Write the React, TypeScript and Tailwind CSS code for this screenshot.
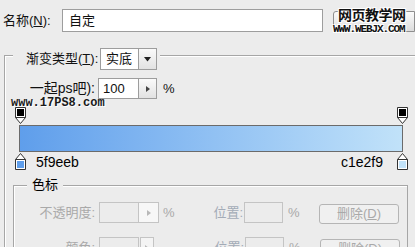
const font = { fontFamily: '"Liberation Sans", "Noto Sans CJK SC", sans-serif' };

function DropArrow() {
  return (
    <svg width="7" height="5" viewBox="0 0 7 5">
      <path d="M0 0h7L3.5 4.5z" fill="#222" />
    </svg>
  );
}

function SpinArrow({ dim = false }: { dim?: boolean }) {
  return (
    <svg width="4" height="6" viewBox="0 0 4 6">
      <path d="M0 0l4 3-4 3z" fill={dim ? '#b8b8b8' : '#444'} />
    </svg>
  );
}

function TopStop() {
  return (
    <svg width="11" height="17" viewBox="0 0 11 17">
      <path d="M0.5 0.5h10v10l-5 6l-5-6z" fill="#fff" stroke="#333" />
      <rect x="2" y="2" width="7" height="7" fill="#000" />
      <path d="M0.5 10.5h10" stroke="#333" />
    </svg>
  );
}

function BottomStop({ color }: { color: string }) {
  return (
    <svg width="11" height="17" viewBox="0 0 11 17">
      <path d="M5.5 0.5l5 6v10h-10v-10z" fill="#fff" stroke="#333" />
      <rect x="2" y="8" width="7" height="7" fill={color} />
      <path d="M0.5 6.5h10" stroke="#333" />
    </svg>
  );
}

function DisabledRow({ label, swatch }: { label: string; swatch?: boolean }) {
  return (
    <div className="flex items-center h-[21px] text-[13px] text-[#a9a9a9]">
      <div className="w-[85px] pr-[4px] text-right">{label}</div>
      <div className="w-[40px] h-[21px] border border-[#c4c4c4]" />
      {swatch ? (
        <div className="w-[14px] h-[21px] ml-[1px] border border-[#c4c4c4] bg-[#f4f4f4] flex items-center justify-center">
          <SpinArrow dim />
        </div>
      ) : (
        <div className="w-[20px] h-[21px] border border-l-0 border-[#c4c4c4] bg-[#f7f7f7] flex items-center justify-center">
          <SpinArrow dim />
        </div>
      )}
      <div className={`${swatch ? 'w-[57px]' : 'w-[51px]'} pl-[4px]`}>{swatch ? '' : '%'}</div>
      <div className="w-[34px] text-right pr-[1px] text-[#a3abb7]">位置:</div>
      <div className="w-[39px] h-[21px] border border-[#c4c4c4]" />
      <div className="w-[36px] pl-[5px]">%</div>
      <div className="w-[80px] h-[20px] self-start mt-[2px] rounded-[3px] border border-[#b5b5b5] bg-[#f0f0f0] flex items-center justify-center">
        删除(<span className="underline">D</span>)
      </div>
    </div>
  );
}

export default function App() {
  return (
    <div className="relative w-[415px] h-[247px] overflow-hidden bg-[#ececec] text-[#111]" style={font}>
      <div className="flex items-start pt-[9px] pl-[3px]">
        <div className="w-[59px] h-[23px] flex items-center text-[13px]">
          名称(<span className="underline">N</span>):
        </div>
        <div className="w-[261px] h-[23px] bg-white border border-[#9d9d9d] flex items-center pl-[6px] text-[13px]">
          自定
        </div>
        <div className="flex-1 ml-[10px] mt-[2px] h-[21px] rounded-l-[3px] border border-[#8f8f8f] bg-gradient-to-b from-[#fbfbfb] to-[#dcdcdc]" />
      </div>

      <div className="absolute left-[338px] top-[8px] text-[14px] font-bold leading-none tracking-[-0.5px] [text-shadow:1px_1px_0_#fff,-1px_-1px_0_#fff,1px_-1px_0_#fff,-1px_1px_0_#fff]">
        网页教学网
      </div>
      <div className="absolute left-[333px] top-[24px] text-[11px] font-bold leading-none tracking-[-1.1px] [text-shadow:1px_1px_0_#fff,-1px_-1px_0_#fff,1px_-1px_0_#fff,-1px_1px_0_#fff]" style={{ fontFamily: '"Liberation Mono", monospace' }}>
        WWW.WEBJX.COM
      </div>

      <div className="relative mt-[23px] ml-[4px] h-[200px] border-l border-t border-[#a6a6a6] shadow-[inset_1px_1px_0_#fff]">
        <div className="-mt-[8px] ml-[8px] w-fit bg-[#ececec] pl-[13px] pr-[3px] flex items-center h-[22px] text-[13px]">
          <div className="w-[74px]">
            渐变类型(<span className="underline">T</span>):
          </div>
          <div className="w-[39px] h-[22px] bg-white border border-[#9d9d9d] flex items-center pl-[5px]">实底</div>
          <div className="w-[18px] h-[22px] border border-l-0 border-[#9d9d9d] bg-gradient-to-b from-[#fafafa] to-[#e2e2e2] flex items-center justify-center">
            <DropArrow />
          </div>
        </div>

        <div className="mt-[8px] flex items-center h-[21px] text-[13px]">
          <div className="w-[93px] pr-[3px] text-right text-[14px]">一起ps吧):</div>
          <div className="w-[41px] h-[21px] bg-white border border-[#9d9d9d] flex items-center pl-[4px]">100</div>
          <div className="w-[18px] h-[21px] border border-l-0 border-[#9d9d9d] bg-gradient-to-b from-[#fafafa] to-[#e2e2e2] flex items-center justify-center">
            <SpinArrow />
          </div>
          <div className="ml-[6px]">%</div>
        </div>

        <div className="absolute left-[6px] top-[41px] text-[12px] font-bold leading-none text-[#1a1a1a] [text-shadow:1px_1px_0_#fff]" style={{ fontFamily: '"Liberation Mono", monospace' }}>
          www.17PS8.com
        </div>

        <div className="relative mt-[8px] pt-[18px] w-[403px]">
          <div className="absolute left-[10px] top-0"><TopStop /></div>
          <div className="absolute left-[392px] top-0"><TopStop /></div>
          <div className="ml-[14px] w-[384px] h-[27px] border border-[#6b6b6b] bg-gradient-to-r from-[#5f9eeb] to-[#c1e2f9]" />
          <div className="absolute left-[10px] top-[46px]"><BottomStop color="#5f9eeb" /></div>
          <div className="absolute left-[392px] top-[46px]"><BottomStop color="#c1e2f9" /></div>
          <div className="mt-[2px] h-[16px] leading-[16px] flex justify-between pl-[31px] pr-[25px] text-[14px] text-black">
            <span>5f9eeb</span>
            <span>c1e2f9</span>
          </div>
        </div>

        <div className="mt-[15px] ml-[8px] w-[395px] h-[80px] border border-[#a6a6a6] shadow-[inset_1px_1px_0_#fff]">
          <div className="-mt-[9px] ml-[13px] w-fit bg-[#ececec] px-[5px] h-[16px] leading-[16px] text-[13px] text-black">色标</div>
          <div className="mt-[9px]">
            <DisabledRow label="不透明度:" />
          </div>
          <div className="mt-[14px]">
            <DisabledRow label="颜色:" swatch />
          </div>
        </div>
      </div>
    </div>
  );
}
